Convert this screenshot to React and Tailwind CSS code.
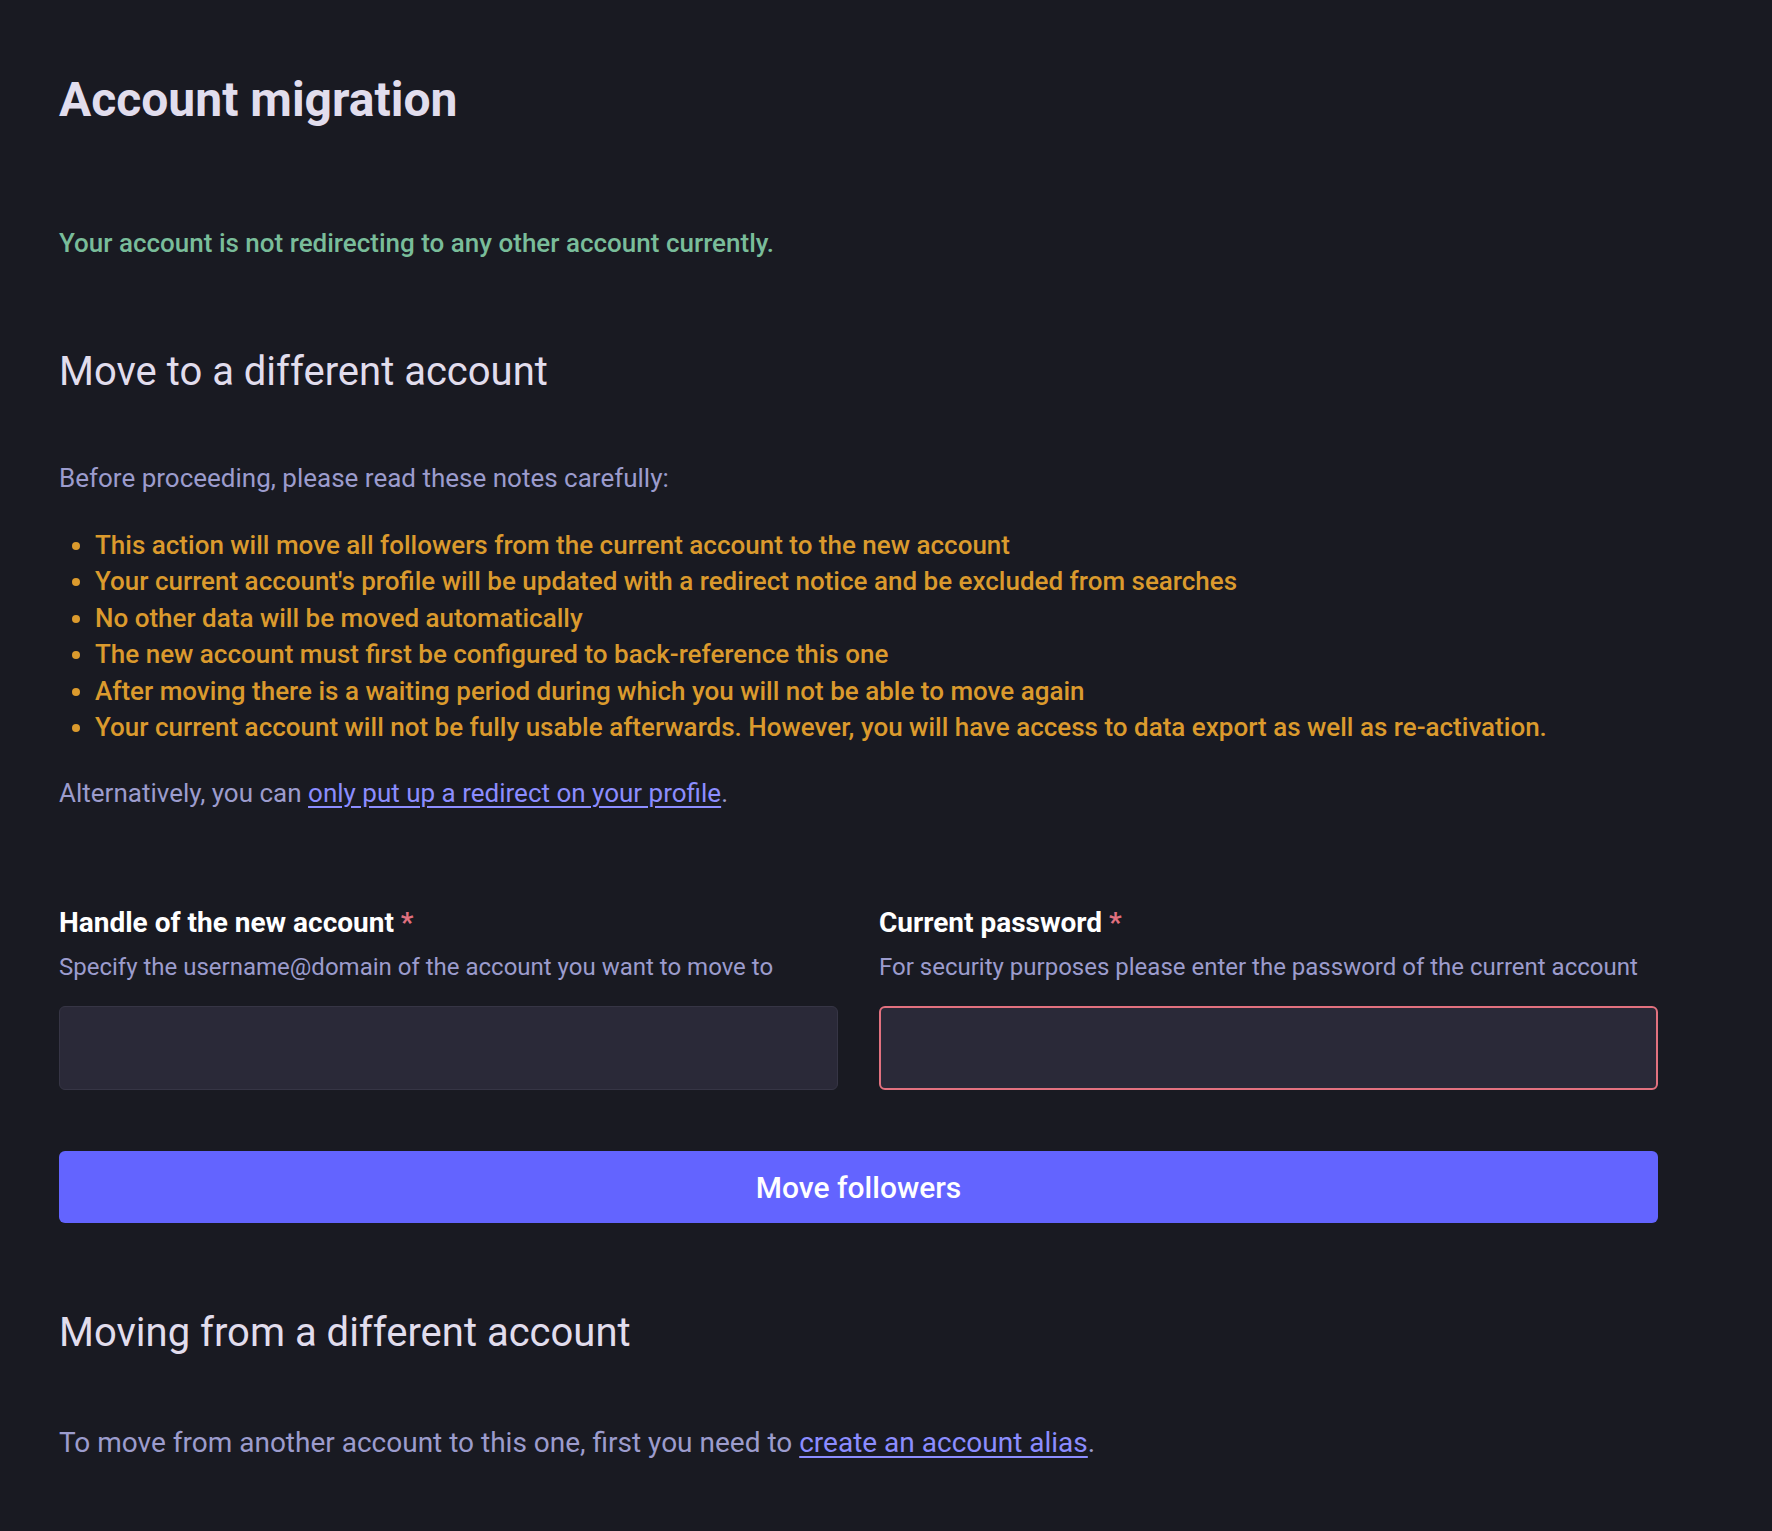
import React from 'react';

const notes = [
    'This action will move all followers from the current account to the new account',
    "Your current account's profile will be updated with a redirect notice and be excluded from searches",
    'No other data will be moved automatically',
    'The new account must first be configured to back-reference this one',
    'After moving there is a waiting period during which you will not be able to move again',
    'Your current account will not be fully usable afterwards. However, you will have access to data export as well as re-activation.',
];

const Field = ({ label, hint, error }) => (
    <div>
        <label className="block text-[28px] leading-[36px] font-bold text-white">
            {label} <span className="text-[#e0707f]">*</span>
        </label>
        <p className="mt-[8px] text-[24px] leading-[36px] text-[#9c9ccd]">{hint}</p>
        <input
            type="text"
            className={`mt-[21px] block w-full h-[84px] rounded-[6px] bg-[#2a2938] px-4 text-white outline-none ${
                error ? 'border-2 border-[#e2717f]' : 'border border-[#363545]'
            }`}
        />
    </div>
);

export default function App() {
    return (
        <div className="min-h-screen bg-[#191a22] font-['Roboto',sans-serif] pl-[59px] pt-[72px] pb-10">
            <div className="w-[1599px]">
                <h2 className="text-[48px] leading-[56px] font-bold text-[#e1dded]">Account migration</h2>

                <p className="mt-[97px] text-[26px] leading-[36px] font-medium text-[#79bd9a]">
                    Your account is not redirecting to any other account currently.
                </p>

                <h3 className="mt-[87px] text-[40px] leading-[48px] text-[#e1dded]">Move to a different account</h3>

                <p className="mt-[64px] text-[26px] leading-[36px] text-[#9c9ccd]">
                    Before proceeding, please read these notes carefully:
                </p>

                <ul className="mt-[31px] pl-[36px] list-disc text-[26px] leading-[36.4px] font-medium text-[#db9a2d]">
                    {notes.map((n) => (
                        <li key={n}>{n}</li>
                    ))}
                </ul>

                <p className="mt-[30px] text-[26px] leading-[36px] text-[#9c9ccd]">
                    Alternatively, you can{' '}
                    <a href="#" className="text-[#8c8dff] underline underline-offset-[4px]">
                        only put up a redirect on your profile
                    </a>
                    .
                </p>

                <div className="mt-[94px] grid grid-cols-2 gap-[41px]">
                    <Field
                        label="Handle of the new account"
                        hint="Specify the username@domain of the account you want to move to"
                    />
                    <Field
                        label="Current password"
                        hint="For security purposes please enter the password of the current account"
                        error
                    />
                </div>

                <button className="mt-[61px] w-full h-[72px] rounded-[6px] bg-[#6364ff] text-white text-[30px] font-medium">
                    Move followers
                </button>

                <h3 className="mt-[86px] text-[40px] leading-[48px] text-[#e1dded]">Moving from a different account</h3>

                <p className="mt-[68px] text-[28px] leading-[36px] text-[#9c9ccd]">
                    To move from another account to this one, first you need to{' '}
                    <a href="#" className="text-[#8c8dff] underline underline-offset-[4px]">
                        create an account alias
                    </a>
                    .
                </p>
            </div>
        </div>
    );
}
